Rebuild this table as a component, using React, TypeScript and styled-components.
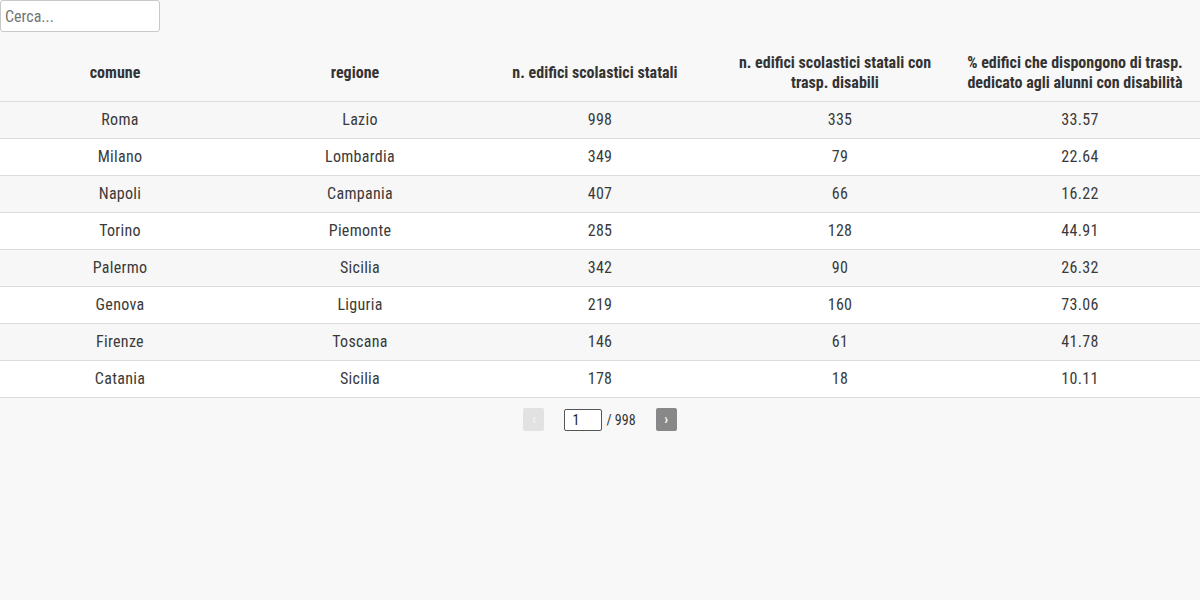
import React from "react";
import styled, { createGlobalStyle } from "styled-components";

const Global = createGlobalStyle`
  html, body { margin: 0; padding: 0; background: #f8f8f8; }
  body {
    font-family: "Roboto Condensed", Roboto, "Liberation Sans", sans-serif;
    font-stretch: condensed;
    color: #333;
  }
`;

const Page = styled.div`
  width: 1200px;
  min-height: 600px;
  background: #f8f8f8;
`;

const Search = styled.input`
  box-sizing: border-box;
  display: block;
  width: 160px;
  height: 32px;
  margin: 0;
  padding: 0 4px;
  border: 1px solid #c8c8c8;
  border-radius: 3px;
  background: #fff;
  font-family: inherit;
  font-stretch: condensed;
  font-size: 16px;
  color: #333;
  &::placeholder { color: #757575; }
  &:focus { outline: none; }
`;

const Table = styled.table`
  width: 1200px;
  margin-top: 10px;
  border-collapse: collapse;
  table-layout: fixed;
`;

const Th = styled.th`
  width: 240px;
  height: 59px;
  padding: 4px 13px 0 3px;
  box-sizing: border-box;
  font-size: 16px;
  font-weight: 700;
  line-height: 20px;
  text-align: center;
  vertical-align: middle;
  color: #333;
  border-bottom: 1px solid #dcdcdc;
`;

const Tr = styled.tr<{ $odd: boolean }>`
  background: ${(p) => (p.$odd ? "#f7f7f7" : "#ffffff")};
  border-bottom: 1px solid #dcdcdc;
`;

const Td = styled.td`
  height: 36px;
  padding: 0;
  text-align: center;
  vertical-align: middle;
  font-size: 16px;
  letter-spacing: 0.3px;
  color: #3a3a3a;
`;

const Pager = styled.div`
  display: flex;
  align-items: center;
  justify-content: center;
  margin-top: 10px;
  height: 24px;
  font-size: 14px;
  color: #333;
`;

const PageBtn = styled.button<{ $disabled?: boolean }>`
  box-sizing: border-box;
  width: 21px;
  height: 23px;
  padding: 0;
  border: none;
  border-radius: 2px;
  background: ${(p) => (p.$disabled ? "#e2e2e2" : "#888888")};
  color: ${(p) => (p.$disabled ? "#f4f4f4" : "#ffffff")};
  font-family: inherit;
  font-size: 14px;
  font-weight: 700;
  line-height: 23px;
  cursor: pointer;
`;

const PageInput = styled.input`
  box-sizing: border-box;
  width: 38px;
  height: 22px;
  margin: 0 4px 0 20px;
  padding: 0 0 0 7px;
  border: 1px solid #555;
  border-radius: 2px;
  background: #fff;
  font-family: inherit;
  font-stretch: condensed;
  font-size: 14px;
  color: #222;
`;

const Total = styled.span`
  margin-right: 20px;
  font-size: 14px;
`;

const rows = [
  ["Roma", "Lazio", "998", "335", "33.57"],
  ["Milano", "Lombardia", "349", "79", "22.64"],
  ["Napoli", "Campania", "407", "66", "16.22"],
  ["Torino", "Piemonte", "285", "128", "44.91"],
  ["Palermo", "Sicilia", "342", "90", "26.32"],
  ["Genova", "Liguria", "219", "160", "73.06"],
  ["Firenze", "Toscana", "146", "61", "41.78"],
  ["Catania", "Sicilia", "178", "18", "10.11"],
];

export default function App() {
  return (
    <Page>
      <Global />
      <Search placeholder="Cerca..." />
      <Table>
        <thead>
          <tr>
            <Th>comune</Th>
            <Th>regione</Th>
            <Th>n. edifici scolastici statali</Th>
            <Th>n. edifici scolastici statali con trasp. disabili</Th>
            <Th>% edifici che dispongono di trasp. dedicato agli alunni con disabilità</Th>
          </tr>
        </thead>
        <tbody>
          {rows.map((r, i) => (
            <Tr key={i} $odd={i % 2 === 0}>
              {r.map((c, j) => (
                <Td key={j}>{c}</Td>
              ))}
            </Tr>
          ))}
        </tbody>
      </Table>
      <Pager>
        <PageBtn $disabled>‹</PageBtn>
        <PageInput defaultValue="1" />
        <Total>/ 998</Total>
        <PageBtn>›</PageBtn>
      </Pager>
    </Page>
  );
}
